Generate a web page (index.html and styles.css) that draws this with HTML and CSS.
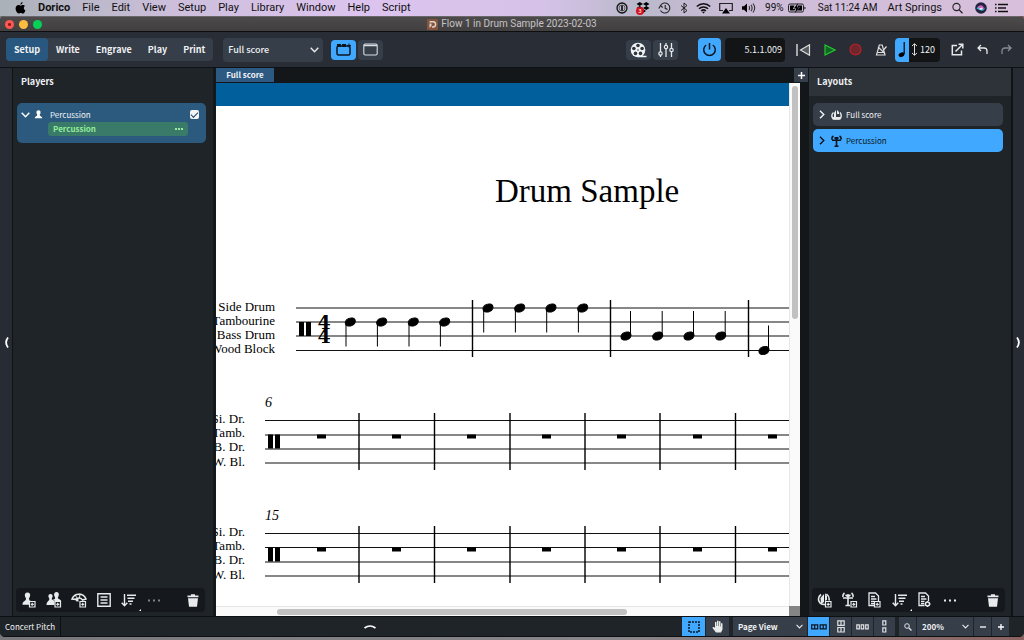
FILE: index.html
```html
<!DOCTYPE html>
<html lang="en">
<head>
    <meta charset="UTF-8">
    <meta name="viewport" content="width=device-width, initial-scale=1.0">
    <title>Flow 1 in Drum Sample 2023-02-03</title>
    <link rel="stylesheet" href="styles.css">
</head>
<body>
    <!-- system menu bar -->
    <header class="menubar">
        <nav class="menus">
            <button class="apple" aria-label="Apple menu"><svg width="11" height="12" viewBox="0 0 11 12"><path d="M7.6 0C7.7 1.4 6.700 2.600 5.400 2.700 5.300 1.400 6.400.2 7.600 0ZM9.900 4.100C8.200 5.200 8.500 7.600 10.400 8.400 9.800 10 8.900 11.600 7.800 11.600 7 11.600 6.700 11.100 5.800 11.100 4.800 11.100 4.500 11.600 3.700 11.600 2.200 11.500.6 8.900.6 6.600.6 4.300 2 3.100 3.500 3.100 4.400 3.100 5.100 3.700 5.700 3.700 6.200 3.700 7.100 3 8.200 3.100 8.900 3.100 9.500 3.500 9.900 4.100Z"/></svg></button>
            <button class="app-name">Dorico</button>
            <button>File</button>
            <button>Edit</button>
            <button>View</button>
            <button>Setup</button>
            <button>Play</button>
            <button>Library</button>
            <button>Window</button>
            <button>Help</button>
            <button>Script</button>
        </nav>
        <div class="tray">
            <svg width="12" height="12" viewBox="0 0 12 12"><circle cx="6" cy="6" r="5" fill="none" stroke="#111" stroke-width="1.300"/><circle cx="6" cy="6" r="3" fill="none" stroke="#333" stroke-width=".7"/><path d="M5.200 3.500h1.600v5H5.200z"/></svg>
            <svg class="dropbox" width="14" height="14" viewBox="0 0 14 14"><path d="M3.700 1 7 3 3.700 5 .5 3zM10.300 1l3.200 2-3.200 2L7 3zM3.700 5 7 7 3.700 9 .5 7zM10.300 5l3.200 2-3.200 2L7 7zM7 8l3 2-3 2-3-2z"/><circle cx="4" cy="10" r="4" fill="#d3121b"/><text x="4" y="12" text-anchor="middle" fill="#fff" font-size="6">3</text></svg>
            <svg width="14" height="12" viewBox="0 0 14 12"><path d="M2.500 3.500A5 5 0 1 1 2.500 8.500M.8 6.500l1.700-3 2.200 2M7.200 3v3.300l2.300 1.200" fill="none" stroke="#222" stroke-width="1.100"/></svg>
            <svg width="8" height="12" viewBox="0 0 8 12"><path d="M1 3.500l6 5L4 11V1l3 2.500-6 5" fill="none" stroke="#222" stroke-width="1"/></svg>
            <svg width="15" height="12" viewBox="0 0 15 12"><path d="M.8 4.500a9.500 9.500 0 0 1 13.400 0M3 6.800a6.400 6.400 0 0 1 9 0M5.200 9a3.300 3.300 0 0 1 4.600 0" fill="none" stroke="#111" stroke-width="1.600"/><path d="M6 9.700h3L7.500 11.500z"/></svg>
            <svg width="14" height="12" viewBox="0 0 14 12"><path d="M4 8.500H.7v-7h12.600v7H10" fill="none" stroke="#222" stroke-width="1.200"/><path d="M7 6l4 5.500H3z"/></svg>
            <svg width="16" height="12" viewBox="0 0 16 12"><path d="M1 4.200h2L6 1.500v9L3 7.800H1z"/><path d="M8 4q1.200 2 0 4M10 2.800q2.200 3.200 0 6.400M12 1.500q3.400 4.500 0 9" fill="none" stroke="#333" stroke-width="1.100"/></svg>
            <span class="charge">99%</span>
            <svg class="battery" width="18" height="10" viewBox="0 0 18 10"><rect x=".5" y="1" width="15" height="8" rx="1.500" fill="none" stroke="#222"/><path d="M2 2.500h4.500L5 6h2.500L6.500 7.500H2zM10 2.500h4v5H9L12 4.200H9.500z"/><path d="M10 0 5.800 5.500h2.400L7 10l4.700-5.800H9z"/><path d="M16.500 3.500v3l1.300-1.500z"/></svg>
            <span class="clock">Sat 11:24 AM</span>
            <span class="user">Art Springs</span>
            <svg class="search" width="11" height="12" viewBox="0 0 11 12"><circle cx="4.500" cy="5" r="3.600" fill="none" stroke="#222" stroke-width="1.100"/><path d="M7 7.600l3.500 3.600" stroke="#222" stroke-width="1.300"/></svg>
            <svg class="siri" width="12" height="12" viewBox="0 0 12 12"><circle cx="6" cy="6" r="5.800" fill="#23233f"/><path d="M1.500 6.500Q4 2.500 6 5.500T10.500 5Q9 9.500 6 8.500T1.500 6.500Z" fill="#3fb5dd"/><path d="M3 4.500Q7 2 8.500 5T5 7z" fill="#d460b8"/><path d="M4 7q2-2 4-1L6 8z" fill="#eef"/></svg>
            <svg width="14" height="10" viewBox="0 0 14 10"><path d="M0 1.500h1.500M0 5h1.500M0 8.500h1.500M3 1.500h10M3 5h8M3 8.500h10" stroke="#111" stroke-width="1.400"/></svg>
        </div>
    </header>

    <div class="window">
        <div class="titlebar">
            <div class="lights"><button class="close" aria-label="Close"></button><button class="minimize" aria-label="Minimize"></button><button class="maximize" aria-label="Maximize"></button></div>
            <div class="doc-title">
                <svg width="11" height="11" viewBox="0 0 11 11"><rect width="11" height="11" rx="1" fill="#86543a"/><path d="M2.500 2.700H6a2.600 2.600 0 0 1 0 5.300H5" fill="none" stroke="#dcd3cf" stroke-width="1.400"/><path d="M2.500 4.500h2V7L2.500 9z" fill="#dcd3cf"/></svg>
                <span>Flow 1 in Drum Sample 2023-02-03</span>
            </div>
        </div>

        <div class="toolbar">
            <div class="modes">
                <button class="active">Setup</button>
                <button>Write</button>
                <button>Engrave</button>
                <button>Play</button>
                <button>Print</button>
            </div>
            <div class="select layout-select">
                <select aria-label="Layout"><option>Full score</option></select>
                <svg width="9" height="6" viewBox="0 0 9 6"><path d="M.7.8l3.800 4 3.800-4"/></svg>
            </div>
            <div class="view-toggles">
                <button class="bright" aria-label="Show tabs"><svg width="16" height="13" viewBox="0 0 16 13"><rect x="1" y="3" width="13" height="9" rx="1.500" fill="none" stroke="#0b1620" stroke-width="1.500"/><path d="M1 1h4v3H1zM6 1h4v3H6zM11 2h1.500V.5h1V2H15v1h-1.500v1.500h-1V3H11z" fill="#0b1620"/></svg></button>
                <button aria-label="Hide tabs"><svg width="15" height="13" viewBox="0 0 15 13"><rect x=".8" y="1" width="13.400" height="11" rx="1.500" fill="none" stroke="#d9dde2" stroke-width="1.100"/><path d="M1 2.500h13" stroke="#d9dde2" stroke-width="1.500"/></svg></button>
            </div>
            <div class="spacer"></div>
            <div class="windows">
                <button aria-label="Video"><svg width="17" height="16" viewBox="0 0 17 16"><circle cx="8" cy="8" r="7.300" fill="#f2f3f4"/><path d="M8 14.500h8.500" stroke="#f2f3f4" stroke-width="1.500"/><g fill="#2f3741"><circle cx="8" cy="3.500" r="1.800"/><circle cx="3.900" cy="6.500" r="1.800"/><circle cx="12.100" cy="6.500" r="1.800"/><circle cx="5.500" cy="11.400" r="1.800"/><circle cx="10.500" cy="11.400" r="1.800"/><circle cx="8" cy="8" r=".8"/></g></svg></button>
                <button aria-label="Mixer"><svg width="16" height="14" viewBox="0 0 16 14"><path d="M2.500 0v9M2.500 12v2M8 0v2M8 6v8M13.500 0v5M13.500 9v5" stroke="#e6e8ea" stroke-width="1.300"/><g fill="none" stroke="#e6e8ea" stroke-width="1.200"><circle cx="2.500" cy="10.500" r="1.700"/><circle cx="8" cy="4" r="1.700"/><circle cx="13.500" cy="7" r="1.700"/></g></svg></button>
            </div>
            <button class="power bright" aria-label="Activate project"><svg width="15" height="15" viewBox="0 0 15 15"><path d="M4.200 3A5.800 5.800 0 1 0 10.800 3M7.500 1v6.500" fill="none" stroke="#0b1620" stroke-width="1.500"/></svg></button>
            <output class="position">5.1.1.009</output>
            <div class="transport">
                <button aria-label="Rewind"><svg width="15" height="12" viewBox="0 0 15 12"><path d="M1 0v12" stroke="#ddd" stroke-width="1.400"/><path d="M13.500.8v10.400L4.500 6z" fill="#555a60" stroke="#ddd" stroke-width="1.200"/></svg></button>
                <button aria-label="Play"><svg width="12" height="12" viewBox="0 0 12 12"><path d="M1 1l10 5-10 5z" fill="#126623" stroke="#23c72f" stroke-width="1.200"/></svg></button>
                <button aria-label="Record"><svg width="13" height="13" viewBox="0 0 13 13"><circle cx="6.500" cy="6.500" r="5.500" fill="#70262c" stroke="#c21f28" stroke-width="1.100"/></svg></button>
                <button aria-label="Click"><svg width="12" height="12" viewBox="0 0 12 12"><path d="M4.300 1h2.900l2.800 10H1.500z" fill="none" stroke="#ddd" stroke-width="1.200"/><path d="M2.500 8.500h6.500M3 3l7 6.500M8.500 6l3-3.500" fill="none" stroke="#ddd" stroke-width="1.200"/></svg></button>
            </div>
            <div class="tempo">
                <button class="bright" aria-label="Fixed tempo"><svg width="8" height="16" viewBox="0 0 8 16"><ellipse cx="3.500" cy="12.700" rx="3" ry="2.200" transform="rotate(-22 3.500 12.700)"/><path d="M6.200 0v12" stroke="#000" stroke-width="1.200"/></svg></button>
                <svg width="7" height="13" viewBox="0 0 7 13"><path d="M3.500 1v11M1 3l2.500-2.300L6 3M1 10l2.500 2.300L6 10" fill="none" stroke="#ddd"/></svg>
                <input type="text" value="120" aria-label="Tempo">
            </div>
            <div class="history">
                <button aria-label="Open window"><svg width="13" height="13" viewBox="0 0 13 13"><path d="M6 2.500H1.300v9.200h9.200V7.500M4.500 8.500L11.500 1.500M7.500 1.200h4.300v4.300" fill="none" stroke="#e6e8ea" stroke-width="1.500"/></svg></button>
                <button aria-label="Undo"><svg width="11" height="11" viewBox="0 0 11 11"><path d="M4 1L1 4l3 3M1 4h6q3 0 3 3v3" fill="none" stroke="#e6e8ea" stroke-width="1.300"/></svg></button>
                <button class="dim" aria-label="Redo"><svg width="11" height="11" viewBox="0 0 11 11"><path d="M7 1l3 3-3 3M10 4H4Q1 4 1 7v3" fill="none" stroke="#e6e8ea" stroke-width="1.300"/></svg></button>
            </div>
        </div>

        <main class="workspace">
            <button class="edge" aria-label="Hide left zone"><svg width="5" height="11" viewBox="0 0 5 11"><path d="M4 .5Q.2 5.500 4 10.500" fill="none" stroke="#fff" stroke-width="1.800"/></svg></button>

            <section class="panel players">
                <h2>Players</h2>
                <div class="panel-body">
                    <div class="player">
                        <div class="player-head">
                            <svg width="9" height="6" viewBox="0 0 9 6"><path d="M.7.8l3.800 4 3.800-4" fill="none" stroke="#fff" stroke-width="1.400"/></svg>
                            <svg width="9" height="9" viewBox="0 0 9 9"><path d="M4.500.3C6 .3 6.800 1.400 6.500 3 6.300 4 5.600 4.300 5.700 5.300 6 6.300 8 6.300 8.300 8.300H.7C1 6.300 3 6.300 3.300 5.300 3.400 4.300 2.700 4 2.500 3 2.200 1.400 3 .3 4.500.3Z" fill="#fff"/></svg>
                            <label for="percussion">Percussion</label>
                            <input type="checkbox" id="percussion" checked>
                        </div>
                        <div class="instrument"><span>Percussion</span><button aria-label="Instrument menu"><svg width="8" height="2" viewBox="0 0 8 2"><path d="M0 0h2v2H0zM3 0h2v2H3zM6 0h2v2H6z" fill="#9be6a0"/></svg></button></div>
                    </div>
                </div>
                <div class="actions">
                    <button aria-label="Add player"><svg width="14" height="16" viewBox="0 0 14 16"><path d="M5.500.5c2 0 3 1.500 2.600 3.400C7.800 5.300 6.900 5.700 7 7c.2 1 1 1.400 2 1.700H7v4H.5C.5 9 4 9 4 7 4.100 5.700 3.200 5.300 2.900 3.900 2.500 2 3.500.5 5.500.5Z"/><path class="plus" d="M7.500 9.500h5.500v5.500H7.500zM10.200 10.800v3M8.800 12.300h3"/></svg></button>
                    <button aria-label="Add ensemble"><svg width="16" height="16" viewBox="0 0 16 16"><path d="M4.500 2C6 2 7 3 6.500 5 6.300 6 5.600 6.200 5.800 7.200L8.500 9v4H.5C.5 9.200 3.300 9 3.300 7.200 3.400 6.200 2.700 6 2.500 5 2 3 3 2 4.500 2ZM10.500 0c1.800 0 2.700 1.400 2.300 3.300-.3 1.300-1 1.600-.9 2.700.2 1.400 3 1.200 3.300 3L9 9 7 7.500c1.800-.5 2.200-.6 2.100-1.600 0-1-.7-1.300-1-2.600C7.800 1.400 8.800 0 10.500 0Z"/><path class="plus" d="M9 9.500h5.500v5.500H9zM11.700 10.800v3M10.300 12.300h3"/></svg></button>
                    <button aria-label="Add ensemble to score"><svg width="16" height="16" viewBox="0 0 16 16"><path d="M1 7A7.500 7.500 0 0 1 15 7L11.500 8A4 4 0 0 0 5 7.500L1 7Z" fill="none" stroke="#e8eaec" stroke-width="1.500"/><path d="M4 3l2.500 3.500M9 1.500L8.500 6" stroke="#e8eaec"/><path d="M3.500 6.500h4v3h-2z"/><path class="plus" d="M9 9.500h5.500v5.500H9zM11.700 10.800v3M10.300 12.300h3"/></svg></button>
                    <button aria-label="Add group"><svg width="14" height="14" viewBox="0 0 14 14"><path d="M.8.8h12.400v12.400H.8zM3.500 4h7M3.500 7h7M3.500 10h7" fill="none" stroke="#e8eaec" stroke-width="1.400"/></svg></button>
                    <button class="more-corner" aria-label="Sort players"><svg width="15" height="13" viewBox="0 0 15 13"><path d="M3.500 0v11.500M.7 8.800l2.800 3 2.800-3M6 1.200h9M6.500 4.200h7M7 7.200h5M8.500 10h2" fill="none" stroke="#e8eaec" stroke-width="1.400"/></svg></button>
                    <button class="dim" aria-label="More"><svg width="12" height="3" viewBox="0 0 12 3"><path d="M0 .5h2v2H0zM5 .5h2v2H5zM10 .5h2v2h-2z"/></svg></button>
                    <button class="trash" aria-label="Delete"><svg width="12" height="13" viewBox="0 0 12 13"><path d="M.5 1.500H4V.3h4v1.200h3.500v1.800H.5zM1 4.300h10l-1 8.400H2z"/></svg></button>
                </div>
            </section>

            <section class="score">
                <div class="score-tabs">
                    <button class="tab">Full score</button>
                    <button class="add-tab" aria-label="New tab"><svg width="7" height="7" viewBox="0 0 7 7"><path d="M3.500 0v7M0 3.500h7" stroke="#fff" stroke-width="1.500"/></svg></button>
                </div>
                <div class="score-body">
                    <div class="page">
                        <div class="flow-band"></div>
                        <!-- the engraved page, cropped by the viewport -->
                        <svg class="music">
                            <defs>
                                <ellipse id="head" rx="5.200" ry="3.900" transform="rotate(-22)"/>
                                <g id="down"><path d="M-4.300 0v24.500"/><use href="#head"/></g>
                                <g id="up"><path d="M4.500 0v-25"/><use href="#head"/></g>
                                <g id="clef"><path d="M0 0h5v14H0zM7 0h5v14H7z" stroke="none"/></g>
                                <path id="rest" d="M0 0h9v4H0z" stroke="none"/>
                                <g id="system">
                                    <g class="names"><text x="29" y="3">Si. Dr.</text><text x="29" y="17">Tamb.</text><text x="29" y="31">B. Dr.</text><text x="29" y="46">W. Bl.</text></g>
                                    <path class="bar" d="M143 -7v57M218.500 -7v57M294 -7v57M369 -7v57M444 -7v57M519.500 -7v57"/>
                                    <use href="#clef" x="52" y="14.500"/>
                                    <use href="#rest" x="101" y="14.500"/><use href="#rest" x="176" y="14.500"/><use href="#rest" x="251" y="14.500"/><use href="#rest" x="326" y="14.500"/><use href="#rest" x="401" y="14.500"/><use href="#rest" x="477" y="14.500"/><use href="#rest" x="552" y="14.500"/>
                                </g>
                            </defs>
                            <text class="title" x="279" y="96">Drum Sample</text>

                            <g class="names"><text x="59" y="205">Side Drum</text><text x="59" y="219">Tambourine</text><text x="59" y="233">Bass Drum</text><text x="59" y="247">Wood Block</text></g>
                            <g class="staff"><line x1="80" y1="202" x2="100%" y2="202"/><line x1="80" y1="216" x2="100%" y2="216"/><line x1="80" y1="230" x2="100%" y2="230"/><line x1="80" y1="244.500" x2="100%" y2="244.500"/></g>
                            <use href="#clef" x="83" y="216"/>
                            <g class="meter"><text x="108" y="223">4</text><text x="108" y="237">4</text></g>
                            <path class="bar" d="M256.500 194v57M394.500 194v57M532.500 194v57"/>
                            <g class="notes">
                                <use href="#down" x="134.300" y="216"/><use href="#down" x="165.700" y="216"/><use href="#down" x="197.300" y="216"/><use href="#down" x="228.700" y="216"/>
                                <use href="#down" x="272" y="202"/><use href="#down" x="303.700" y="202"/><use href="#down" x="335" y="202"/><use href="#down" x="366.700" y="202"/>
                                <use href="#up" x="410" y="230"/><use href="#up" x="441.700" y="230"/><use href="#up" x="473" y="230"/><use href="#up" x="504.700" y="230"/>
                                <use href="#up" x="548" y="244.500"/>
                            </g>

                            <text class="bar-number" x="49" y="301">6</text>
                            <g class="staff"><line x1="49" y1="314.500" x2="100%" y2="314.500"/><line x1="49" y1="329" x2="100%" y2="329"/><line x1="49" y1="343" x2="100%" y2="343"/><line x1="49" y1="357" x2="100%" y2="357"/></g>
                            <use href="#system" y="314"/>

                            <text class="bar-number" x="49" y="414">15</text>
                            <g class="staff"><line x1="49" y1="427.500" x2="100%" y2="427.500"/><line x1="49" y1="441.500" x2="100%" y2="441.500"/><line x1="49" y1="456" x2="100%" y2="456"/><line x1="49" y1="470" x2="100%" y2="470"/></g>
                            <use href="#system" y="427"/>
                        </svg>
                    </div>
                    <div class="vscroll"><div class="thumb"></div></div>
                    <div class="hscroll"><div class="thumb"></div></div>
                    <div class="corner"></div>
                </div>
            </section>

            <section class="panel layouts">
                <h2>Layouts</h2>
                <div class="panel-body">
                    <button class="layout">
                        <svg class="arrow" width="6" height="9" viewBox="0 0 6 9"><path d="M1 .7l3.800 3.800L1 8.300"/></svg>
                        <svg width="11" height="11" viewBox="0 0 11 11"><path d="M2.500 3.500C-.5 6 1 10 4 10h3.500C10.500 10 11 6 9 3.500" fill="none" stroke="#e8eaec" stroke-width="1.400"/><path d="M3 4l2-3v8H3zM6 1l2 2v2H6zM1.500 8h8v2.500h-8z" fill="#e8eaec"/></svg>
                        <span>Full score</span>
                    </button>
                    <button class="layout selected">
                        <svg class="arrow" width="6" height="9" viewBox="0 0 6 9"><path d="M1 .7l3.800 3.800L1 8.300"/></svg>
                        <svg width="11" height="12" viewBox="0 0 11 12"><path d="M5.500 2v9M3.500 11.200h4M2.500 1Q.5 2 1 4.500M8.500 1Q10.500 2 10 4.500M1 5.200h9M3.500 2.500l2 1.500 2-1.500" fill="none" stroke="#0b1620" stroke-width="1.600"/></svg>
                        <span>Percussion</span>
                    </button>
                </div>
                <div class="actions">
                    <button aria-label="Add full score layout"><svg width="15" height="16" viewBox="0 0 15 16"><path d="M4 2.500C-.5 6 1.500 13 8 12.500M9.500 2C12 4 12.500 6 12 8.500" fill="none" stroke="#e8eaec" stroke-width="1.600"/><path d="M3.500 6 7 2v8L4 12zM8 1l2 3v4L8 9z"/><path class="plus" d="M8.500 9.500H14v5.500H8.500zM11.200 10.800v3M9.800 12.300h3"/></svg></button>
                    <button aria-label="Add part layout"><svg width="16" height="16" viewBox="0 0 16 16"><path d="M6 2v11M3.500 13.500H8M2.500 1Q.5 2.500 1 5M9.500 1Q11.500 2.500 11 5M1 6h10M3.500 3l2.500 1.500L8.500 3" fill="none" stroke="#e8eaec" stroke-width="1.600"/><path class="plus" d="M9 9.500h5.500v5.500H9zM11.700 10.800v3M10.300 12.300h3"/></svg></button>
                    <button aria-label="Add custom layout"><svg width="13" height="16" viewBox="0 0 13 16"><path d="M6.500 13.500H1V1h6.500L10.500 4v5M3 4.500h4M3 7h5.500M3 9.300h3.500M3 11.500h3" fill="none" stroke="#e8eaec" stroke-width="1.300"/><path class="plus" d="M6.500 9.500H12v5.500H6.500zM9.200 10.800v3M7.800 12.300h3"/></svg></button>
                    <button class="more-corner" aria-label="Sort layouts"><svg width="15" height="13" viewBox="0 0 15 13"><path d="M3.500 0v11.500M.7 8.800l2.800 3 2.800-3M6 1.200h9M6.500 4.200h7M7 7.200h5M8.500 10h2" fill="none" stroke="#e8eaec" stroke-width="1.400"/></svg></button>
                    <button aria-label="Layout options"><svg width="13" height="16" viewBox="0 0 13 16"><path d="M6.500 13.500H1V1h6.500L10.500 4v5M3 4.500h4M3 7h5.500M3 9.300h3.500M3 11.500h3" fill="none" stroke="#e8eaec" stroke-width="1.300"/><circle cx="9.500" cy="12" r="2" fill="none" stroke="#e8eaec" stroke-width="1.500"/><path d="M9.500 9v6M6.500 12h6" stroke="#e8eaec" stroke-dasharray="1.200 3.600"/></svg></button>
                    <button aria-label="More"><svg width="12" height="3" viewBox="0 0 12 3"><path d="M0 .5h2v2H0zM5 .5h2v2H5zM10 .5h2v2h-2z"/></svg></button>
                    <button class="trash" aria-label="Delete"><svg width="12" height="13" viewBox="0 0 12 13"><path d="M.5 1.500H4V.3h4v1.200h3.500v1.800H.5zM1 4.300h10l-1 8.400H2z"/></svg></button>
                </div>
            </section>

            <button class="edge right" aria-label="Hide right zone"><svg width="5" height="11" viewBox="0 0 5 11"><path d="M1 .5Q4.800 5.500 1 10.500" fill="none" stroke="#fff" stroke-width="1.800"/></svg></button>
        </main>

        <footer class="status">
            <button class="pitch">Concert Pitch</button>
            <button class="lower-zone" aria-label="Show lower zone"><svg width="12" height="5" viewBox="0 0 12 5"><path d="M.5 4Q6 0 11.500 4" fill="none" stroke="#fff" stroke-width="1.600"/></svg></button>
            <div class="tools">
                <button class="bright wide" aria-label="Marquee tool"><svg width="12" height="12" viewBox="0 0 12 12"><path d="M1 1h10v10H1z" fill="none" stroke="#0b1620" stroke-width="1.500" stroke-dasharray="2 1"/></svg></button>
                <button class="wide" aria-label="Hand tool"><svg width="12" height="13" viewBox="0 0 12 13"><path d="M4 12.500L.5 8Q.5 6.500 2 7l1 1V2.300q.8-.9 1.500 0V6h.5V1q.8-1 1.500 0v5H7V1.500q.8-.9 1.500 0V6.500H9V3.500q.8-.9 1.500 0V9.500L9 12.500z" fill="#e8eaec"/></svg></button>
            </div>
            <div class="tools">
                <div class="select page-view">
                    <select aria-label="View"><option>Page View</option></select>
                    <svg width="7" height="5" viewBox="0 0 9 6"><path d="M.7.8l3.800 4 3.800-4"/></svg>
                </div>
                <button class="bright" aria-label="Spreads horizontally"><svg width="16" height="6" viewBox="0 0 16 6"><path d="M.7.8h3v4h-3zM3.700.8h3v4h-3zM9.200.8h3v4h-3zM12.200.8h3v4h-3z" fill="none" stroke="#0b1620" stroke-width="1.200"/></svg></button>
                <button aria-label="Spreads vertically"><svg width="8" height="13" viewBox="0 0 8 13"><path d="M.8.8H4v4.500H.8zM4 .8h3.200v4.500H4zM.8 7.500H4V12H.8zM4 7.500h3.200V12H4z" fill="none" stroke="#dfe2e5" stroke-width="1.200"/></svg></button>
                <button aria-label="Single pages horizontally"><svg width="13" height="6" viewBox="0 0 13 6"><path d="M.8.8h2.500v4H.8zM5.200.8h2.500v4H5.200zM9.700.8h2.500v4H9.700z" fill="none" stroke="#dfe2e5" stroke-width="1.200"/></svg></button>
                <button aria-label="Single pages vertically"><svg width="5" height="13" viewBox="0 0 5 13"><path d="M.8.8h3v4.200h-3zM.8 7.800h3V12h-3z" fill="none" stroke="#dfe2e5" stroke-width="1.200"/></svg></button>
            </div>
            <div class="tools zoom">
                <button aria-label="Zoom"><svg width="8" height="8" viewBox="0 0 8 8"><circle cx="3" cy="3" r="2.300" fill="none" stroke="#dfe2e5"/><path d="M4.700 4.700L7.500 7.500" stroke="#dfe2e5" stroke-width="1.300"/></svg></button>
                <div class="select zoom-level">
                    <select aria-label="Zoom level"><option>200%</option></select>
                    <svg width="7" height="5" viewBox="0 0 9 6"><path d="M.7.8l3.800 4 3.800-4"/></svg>
                </div>
                <button aria-label="Zoom out"><svg width="6" height="6" viewBox="0 0 6 6"><path d="M0 3h6" stroke="#fff" stroke-width="1.300"/></svg></button>
                <button aria-label="Zoom in"><svg width="6" height="6" viewBox="0 0 6 6"><path d="M0 3h6M3 0v6" stroke="#fff" stroke-width="1.300"/></svg></button>
            </div>
        </footer>
    </div>
</body>
</html>
```
FILE: styles.css
```css
* {
    box-sizing: border-box;
}

body {
    margin: 0;
    height: 100vh;
    display: flex;
    flex-direction: column;
    overflow: hidden;
    background: linear-gradient(to right, #77777c, #88868a 60%, #8a6260);
    color: #f0f2f4;
    font: 8px/12px "Noto Sans CJK SC", "Noto Sans", sans-serif;
}

button, select, input {
    margin: 0;
    padding: 0;
    border: 0;
    background: none;
    color: inherit;
    font: inherit;
}

button {
    display: flex;
    align-items: center;
    justify-content: center;
}

svg {
    display: block;
    flex: none;
}

/* system menu bar */
.menubar {
    height: 16px;
    padding: 0 15px;
    display: flex;
    align-items: center;
    justify-content: space-between;
    background: linear-gradient(to right, #aab1b8, #cdbfdc 17%, #dcc4ee 35%, #d6c2e8 53%, #bbb9cc 62%, #cdbcd8 75%, #d8c0dc);
    color: #111;
    font: 11px/14px Roboto, sans-serif;
}

.menus {
    display: flex;
    gap: 12px;
}

.app-name {
    font-weight: bold;
}

.tray {
    display: flex;
    align-items: center;
    gap: 8px;
}

.tray .charge,
.tray .clock {
    font-size: 10px;
}

.tray .battery {
    margin-left: -4px;
}

.tray .clock {
    margin-left: 4px;
}

.tray .user,
.tray .search {
    margin-left: 2px;
}

.tray .siri {
    margin-left: 4px;
}

/* window frame */
.window {
    flex: 1;
    min-height: 0;
    margin-bottom: 3px;
    display: flex;
    flex-direction: column;
    background: #1f2428;
    border-radius: 5px;
    overflow: hidden;
}

.titlebar {
    height: 16px;
    display: grid;
    grid-template-columns: 1fr auto 1fr;
    align-items: center;
    background: linear-gradient(#4c4a4b, #413f40);
    border-top: 1px solid #69676a;
    border-bottom: 1px solid #0d0e10;
    color: #c5c3c4;
    font: 10px/12px Roboto, sans-serif;
}

.lights {
    display: flex;
    gap: 5px;
    padding-left: 5px;
}

.lights button {
    width: 9px;
    height: 9px;
    border-radius: 50%;
}

.close {
    background: radial-gradient(circle, #8f1512 1px, #fc5753 2px);
}

.minimize {
    background: #fdbc40;
}

.maximize {
    background: #08cf57;
}

.doc-title {
    display: flex;
    align-items: center;
    gap: 3px;
}

/* toolbar */
.toolbar {
    height: 36px;
    padding: 0 12px 0 6px;
    display: flex;
    align-items: center;
    background: #292d35;
    border-bottom: 1px solid #0f1215;
    font-size: 9px;
}

.modes {
    display: flex;
    height: 23px;
    border-radius: 4px;
    background: #363e49;
    font-weight: bold;
}

.modes button {
    padding: 0 8px;
    border-radius: 4px;
}

.modes .active {
    background: #28587f;
}

.bright {
    background: #40a9ff;
}

.select {
    position: relative;
    display: flex;
    align-items: center;
    background: #363e49;
}

.select select {
    width: 100%;
    height: 100%;
    padding-left: 5px;
    appearance: none;
    outline: none;
}

.select svg {
    position: absolute;
    right: 4px;
    fill: none;
    stroke: #e8eaec;
    stroke-width: 1.4;
    pointer-events: none;
}

.layout-select {
    width: 100px;
    height: 24px;
    margin-left: 10px;
    border-radius: 4px;
    font-weight: 500;
}

.view-toggles,
.windows {
    display: flex;
    gap: 2px;
    margin-left: 8px;
}

.view-toggles button,
.windows button {
    width: 25px;
    height: 20px;
    border-radius: 4px;
    background: #363e49;
}

.view-toggles .bright {
    background: #40a9ff;
}

.spacer {
    flex: 1;
}

.power {
    width: 23px;
    height: 23px;
    margin-left: 20px;
    border-radius: 4px;
}

.position {
    width: 60px;
    height: 24px;
    margin-left: 4px;
    padding-right: 3px;
    border-radius: 4px;
    background: #121416;
    line-height: 24px;
    text-align: right;
}

.transport,
.history {
    display: flex;
    align-items: center;
    gap: 13px;
    margin-left: 11px;
}

.tempo {
    width: 45px;
    height: 24px;
    margin-left: 8px;
    display: flex;
    align-items: center;
    gap: 2px;
    border-radius: 4px;
    background: #121416;
    overflow: hidden;
}

.tempo button {
    width: 14px;
    height: 24px;
}

.tempo input {
    width: 20px;
}

.dim {
    opacity: 0.5;
}

/* main area */
.workspace {
    flex: 1;
    min-height: 0;
    display: grid;
    grid-template-columns: 13px 203px minmax(0, 1fr) 203px 12px;
}

.edge {
    background: #272c34;
    border-right: 1px solid #101316;
}

.edge.right {
    border-right: 0;
    border-left: 1px solid #101316;
}

.panel {
    min-height: 0;
    display: flex;
    flex-direction: column;
}

.players {
    border-right: 3px solid #14181b;
}

.layouts {
    border-right: 1px solid #101316;
}

.panel h2 {
    height: 28px;
    margin: 0;
    padding: 0 8px;
    font-size: 9px;
    line-height: 28px;
}

.layouts h2 {
    background: #2d3339;
}

.panel-body {
    flex: 1;
    padding: 7px 7px 0 4px;
}

.layouts .panel-body {
    padding-right: 8px;
}

.player {
    padding: 5px 7px 7px 4px;
    border-radius: 5px;
    background: #2c5a7f;
}

.player-head {
    height: 13px;
    display: flex;
    align-items: center;
    gap: 4px;
}

.player-head label {
    flex: 1;
    padding-left: 3px;
}

.player-head input {
    appearance: none;
    width: 9px;
    height: 9px;
    border-radius: 2px;
    background: #f3f5f7;
    display: grid;
    place-items: center;
}

.player-head input:checked::after {
    content: "";
    width: 6px;
    height: 3px;
    margin-bottom: 2px;
    border-left: 1px solid #1d4262;
    border-bottom: 1px solid #1d4262;
    transform: rotate(-45deg);
}

.instrument {
    height: 14px;
    margin: 1px 11px 0 27px;
    padding: 0 5px;
    display: flex;
    align-items: center;
    justify-content: space-between;
    border-radius: 3px;
    background: #3a7a68;
    color: #92ec98;
    font-weight: bold;
}

.layout {
    width: 100%;
    height: 23px;
    margin-bottom: 3px;
    padding-left: 6px;
    justify-content: flex-start;
    gap: 4px;
    border-radius: 5px;
    background: #363e49;
}

.layout .arrow {
    margin-right: 2px;
    fill: none;
    stroke: currentColor;
    stroke-width: 1.4;
}

.layout.selected {
    background: #40a9ff;
    color: #0b1620;
}

.actions {
    height: 24px;
    margin: 0 8px 4px 3px;
    display: flex;
    align-items: center;
    border-radius: 4px;
    background: #15191d;
}

.layouts .actions {
    margin-right: 6px;
}

.actions button {
    position: relative;
    width: 25px;
    height: 24px;
}

.actions svg {
    fill: #e8eaec;
}

.actions .plus {
    fill: #15191d;
    stroke: #e8eaec;
    stroke-width: 1.2;
}

.actions .trash {
    margin-left: auto;
}

.more-corner::after {
    content: "";
    position: absolute;
    right: 0;
    bottom: 1px;
    border: 1px solid #fff;
    border-top-color: transparent;
    border-left-color: transparent;
}

/* score view */
.score {
    min-height: 0;
    display: flex;
    flex-direction: column;
    background: #14171a;
}

.score-tabs {
    height: 15px;
    padding-right: 1px;
    display: flex;
    justify-content: space-between;
}

.score-tabs button {
    height: 14px;
    background: #363e49;
}

.score-tabs .tab {
    width: 58px;
    background: #2c5a83;
    font-weight: bold;
}

.score-tabs .add-tab {
    width: 14px;
}

.score-body {
    flex: 1;
    min-height: 0;
    margin-right: 9px;
    display: grid;
    grid-template-columns: minmax(0, 1fr) 11px;
    grid-template-rows: minmax(0, 1fr) 10px;
    background: #fff;
}

.page {
    display: flex;
    flex-direction: column;
    overflow: hidden;
}

.flow-band {
    height: 23px;
    background: #015f9b;
}

.music {
    flex: 1;
    width: 100%;
    fill: #000;
    stroke: none;
    font-family: "Liberation Serif", serif;
}

.title {
    font-size: 33px;
}

.names {
    font-size: 13px;
    text-anchor: end;
}

.bar-number {
    font-size: 14px;
    font-style: italic;
}

.meter {
    font: bold 19px "DejaVu Serif", serif;
    text-anchor: middle;
}

.staff {
    stroke: #111;
    stroke-width: 1.2;
}

.bar {
    stroke: #000;
    stroke-width: 1.4;
}

.notes {
    stroke: #000;
    stroke-width: 1;
}

.vscroll,
.hscroll {
    padding: 3px 2px;
    background: #fafafa;
    border-left: 1px solid #e6e6e6;
}

.hscroll {
    padding: 2px 0;
    border-left: 0;
    border-top: 1px solid #e6e6e6;
}

.thumb {
    border-radius: 3px;
    background: #c1c1c1;
}

.vscroll .thumb {
    width: 6px;
    height: 45%;
}

.hscroll .thumb {
    width: 61%;
    height: 6px;
    margin-left: 61px;
}

.corner {
    background: #858585;
}

/* status bar */
.status {
    height: 21px;
    padding-right: 15px;
    display: flex;
    align-items: center;
    border-top: 1px solid #0d1013;
    border-bottom: 1px solid #0d1013;
    background: #1f2428;
}

.pitch {
    height: 100%;
    padding: 0 5px;
    border-right: 1px solid #0d1013;
}

.lower-zone {
    flex: 1;
    height: 100%;
}

.tools {
    height: 19px;
    margin-left: 4px;
    display: flex;
    gap: 1px;
}

.tools button {
    width: 21px;
    background: #363e49;
}

.tools .wide {
    width: 23px;
}

.tools .bright {
    background: #40a9ff;
}

.page-view {
    width: 74px;
    font-weight: bold;
}

.zoom button {
    width: 17px;
}

.zoom-level {
    width: 56px;
    font-weight: bold;
}
```
